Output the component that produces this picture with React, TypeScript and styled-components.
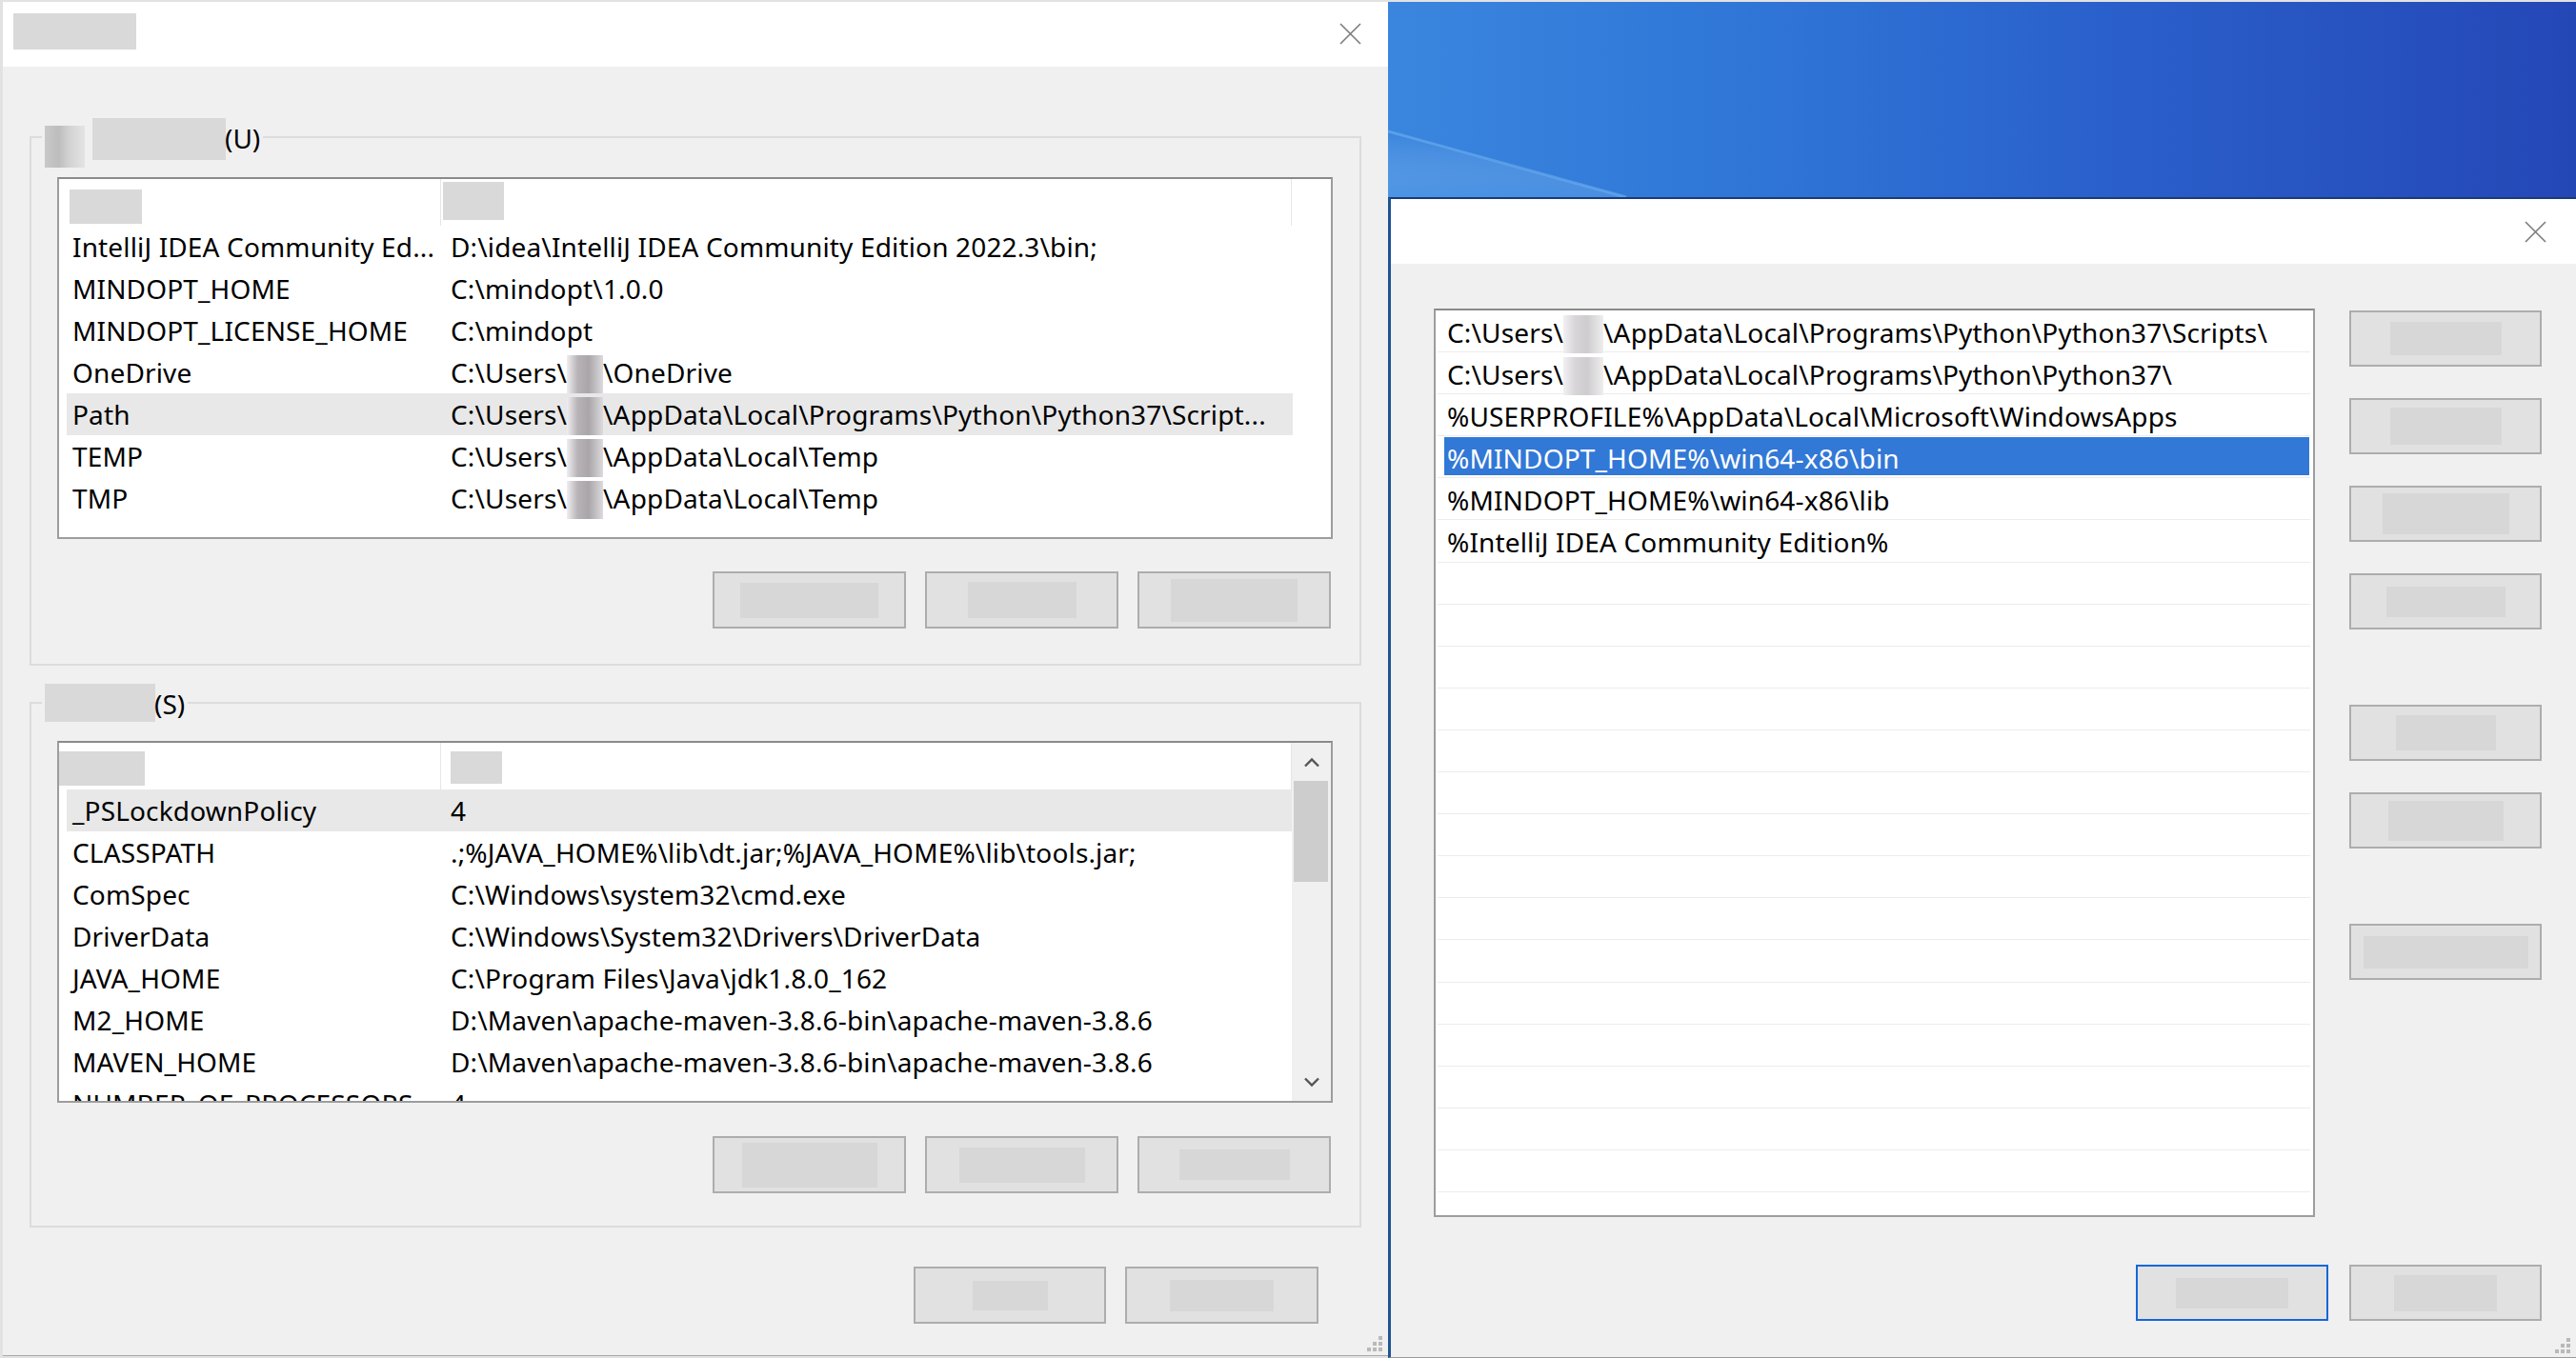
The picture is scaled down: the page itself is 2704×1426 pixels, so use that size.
import React from "react";
import styled, { createGlobalStyle } from "styled-components";

const GlobalStyle = createGlobalStyle`
  html, body {
    margin: 0;
    padding: 0;
  }
  body {
    width: 2704px;
    height: 1426px;
    overflow: hidden;
    background: #e2e2e2;
    font-family: "Noto Sans", "Liberation Sans", sans-serif;
    color: #000;
  }
  * {
    box-sizing: border-box;
  }
`;

const Screen = styled.div`
  display: flex;
  width: 2704px;
  height: 1426px;
  padding: 2px 0 0 3px;
  background: #e2e2e2;
`;

/* ---------- left window: environment variables ---------- */

const LeftWindow = styled.div`
  position: relative;
  display: flex;
  flex-direction: column;
  width: 1454px;
  height: 1422px;
  background: #f0f0f0;
  border-bottom: 1px solid #a9a9a9;
`;

const TitleBar = styled.div<{ $pad: string }>`
  display: flex;
  justify-content: space-between;
  align-items: flex-start;
  height: 68px;
  flex-shrink: 0;
  padding: ${(p) => p.$pad};
  background: #fff;
`;

const Smudge = styled.span<{ $w: number; $h: number; $c?: string }>`
  display: inline-block;
  flex-shrink: 0;
  width: ${(p) => p.$w}px;
  height: ${(p) => p.$h}px;
  background: ${(p) => p.$c || "#d9d9d9"};
`;

const CloseButton = styled.span<{ $mt: number }>`
  display: flex;
  margin-top: ${(p) => p.$mt}px;
`;

const LeftBody = styled.div`
  display: flex;
  flex-direction: column;
  padding-top: 73px;
`;

const GroupBox = styled.div<{ $mt: number; $pb: number }>`
  display: flex;
  flex-direction: column;
  margin: ${(p) => p.$mt}px 28px 0;
  padding: 0 28px ${(p) => p.$pb}px 27px;
  border: 2px solid #dcdcdc;
`;

const GroupTitle = styled.div<{ $gap: number }>`
  display: flex;
  align-items: flex-start;
  align-self: flex-start;
  height: 40px;
  margin: -21px 0 ${(p) => p.$gap}px -16px;
  padding: 0 3px;
  background: #f0f0f0;
  font-size: 28px;
  line-height: 40px;
`;

const GroupKey = styled.span`
  margin-left: -1px;
  line-height: 42px;
`;

const DarkSmudge = styled.span`
  display: inline-block;
  width: 42px;
  height: 44px;
  margin: 8px 8px 0 0;
  background: linear-gradient(
    90deg,
    #c9c9c9 0%,
    #bdbdbd 35%,
    #d2d2d2 60%,
    #e4e4e4 100%
  );
`;

const ListBox = styled.div<{ $h: number }>`
  display: flex;
  height: ${(p) => p.$h}px;
  border: 2px solid #9d9d9d;
  border-top-color: #8a8a8a;
  background: #fff;
  overflow: hidden;
`;

const ListMain = styled.div`
  flex: 1;
  min-width: 0;
  overflow: hidden;
`;

const Header = styled.div`
  display: flex;
  height: 49px;
`;

const HeaderCell = styled.div<{ $w: number }>`
  display: flex;
  width: ${(p) => p.$w}px;
  flex-shrink: 0;
  border-right: 1px solid #e6e6e6;
`;

const HeaderLabel = styled.span<{ $w: number; $h: number; $ml: number; $mt: number }>`
  display: inline-block;
  width: ${(p) => p.$w}px;
  height: ${(p) => p.$h}px;
  margin: ${(p) => p.$mt}px 0 0 ${(p) => p.$ml}px;
  background: #d9d9d9;
`;

const VarRow = styled.div<{ $active?: boolean }>`
  display: flex;
  width: 1287px;
  height: 44px;
  margin-left: 8px;
  font-size: 28px;
  line-height: 44px;
  letter-spacing: 0.15px;
  white-space: nowrap;
  background: ${(p) => (p.$active ? "#e8e8e8" : "transparent")};
`;

const NameCell = styled.div`
  width: 403px;
  flex-shrink: 0;
  padding: 0 8px 0 6px;
  overflow: hidden;
`;

const ValueCell = styled.div`
  flex: 1;
  min-width: 0;
  overflow: hidden;
`;

const Hidden = styled.span<{ $w: number; $light?: boolean }>`
  display: inline-block;
  width: ${(p) => p.$w}px;
  height: 40px;
  vertical-align: -11px;
  background: ${(p) =>
    p.$light
      ? "linear-gradient(90deg, #f2f0f2 0%, #d8d5d8 30%, #cfcccf 60%, #eeeeee 100%)"
      : "linear-gradient(90deg, #f0eef0 0%, #b7b3b7 30%, #a9a5a9 60%, #dcdadc 100%)"};
`;

const Scrollbar = styled.div`
  display: flex;
  flex-direction: column;
  width: 41px;
  flex-shrink: 0;
  background: #f0f0f0;
`;

const ScrollArrow = styled.div`
  display: flex;
  align-items: center;
  justify-content: center;
  height: 40px;
  flex-shrink: 0;
`;

const ScrollThumb = styled.div`
  height: 106px;
  margin: 0 3px 0 2px;
  background: #cdcdcd;
`;

const ScrollTrack = styled.div`
  flex: 1;
`;

const ButtonRow = styled.div<{ $mt: number; $pr: number; $gap: number }>`
  display: flex;
  justify-content: flex-end;
  gap: ${(p) => p.$gap}px;
  margin-top: ${(p) => p.$mt}px;
  padding-right: ${(p) => p.$pr}px;
`;

const Button = styled.div<{ $w: number; $h: number; $mt?: number; $primary?: boolean }>`
  display: flex;
  align-items: center;
  justify-content: center;
  width: ${(p) => p.$w}px;
  height: ${(p) => p.$h}px;
  margin-top: ${(p) => p.$mt || 0}px;
  flex-shrink: 0;
  background: #e1e1e1;
  border: 2px solid ${(p) => (p.$primary ? "#1467d8" : "#adadad")};
`;

const ButtonLabel = styled.span<{ $w: number; $h: number }>`
  display: inline-block;
  width: ${(p) => p.$w}px;
  height: ${(p) => p.$h}px;
  background: #d7d7d7;
`;

const Grip = styled.div`
  position: absolute;
  right: 4px;
  bottom: 2px;
  display: flex;
`;

/* ---------- right side: desktop and path editor ---------- */

const DesktopColumn = styled.div`
  display: flex;
  flex-direction: column;
  flex: 1;
  min-width: 0;
`;

const Wallpaper = styled.svg`
  display: block;
  width: 100%;
  height: 205px;
  flex-shrink: 0;
`;

const RightWindow = styled.div`
  position: relative;
  display: flex;
  flex-direction: column;
  flex: 1;
  background: #f0f0f0;
  border-top: 2px solid #1b3a7a;
  border-left: 3px solid #1e5493;
  border-bottom: 1px solid #9a9a9a;
`;

const RightBody = styled.div`
  display: flex;
  flex-direction: column;
  padding: 47px 36px 0 45px;
`;

const EditorRow = styled.div`
  display: flex;
  align-items: flex-start;
  gap: 36px;
`;

const PathList = styled.div`
  width: 925px;
  height: 954px;
  flex-shrink: 0;
  border: 2px solid #9d9d9d;
  border-top-color: #8a8a8a;
  background: #fff;
  overflow: hidden;
`;

const PathRow = styled.div`
  display: flex;
  height: 44.1px;
  margin: 0 3px 0 2px;
  padding: 1px 1px 3px 7px;
  border-bottom: 1px solid #ececec;
`;

const PathText = styled.div<{ $selected?: boolean }>`
  flex: 1;
  height: 40px;
  padding: 4px 0 0 3px;
  font-size: 28px;
  line-height: 36px;
  letter-spacing: 0.15px;
  white-space: nowrap;
  color: ${(p) => (p.$selected ? "#fff" : "#000")};
  background: ${(p) => (p.$selected ? "#3278d6" : "transparent")};
`;

const SideButtons = styled.div`
  display: flex;
  flex-direction: column;
  padding-top: 2px;
`;

/* ---------- data ---------- */

const userVars = [
  { name: "IntelliJ IDEA Community Ed...", value: "D:\\idea\\IntelliJ IDEA Community Edition 2022.3\\bin;" },
  { name: "MINDOPT_HOME", value: "C:\\mindopt\\1.0.0" },
  { name: "MINDOPT_LICENSE_HOME", value: "C:\\mindopt" },
  { name: "OneDrive", value: "C:\\Users\\*\\OneDrive" },
  { name: "Path", value: "C:\\Users\\*\\AppData\\Local\\Programs\\Python\\Python37\\Script...", active: true },
  { name: "TEMP", value: "C:\\Users\\*\\AppData\\Local\\Temp" },
  { name: "TMP", value: "C:\\Users\\*\\AppData\\Local\\Temp" },
];

const systemVars = [
  { name: "_PSLockdownPolicy", value: "4", active: true },
  { name: "CLASSPATH", value: ".;%JAVA_HOME%\\lib\\dt.jar;%JAVA_HOME%\\lib\\tools.jar;" },
  { name: "ComSpec", value: "C:\\Windows\\system32\\cmd.exe" },
  { name: "DriverData", value: "C:\\Windows\\System32\\Drivers\\DriverData" },
  { name: "JAVA_HOME", value: "C:\\Program Files\\Java\\jdk1.8.0_162" },
  { name: "M2_HOME", value: "D:\\Maven\\apache-maven-3.8.6-bin\\apache-maven-3.8.6" },
  { name: "MAVEN_HOME", value: "D:\\Maven\\apache-maven-3.8.6-bin\\apache-maven-3.8.6" },
  { name: "NUMBER_OF_PROCESSORS", value: "4" },
];

const pathEntries = [
  "C:\\Users\\*\\AppData\\Local\\Programs\\Python\\Python37\\Scripts\\",
  "C:\\Users\\*\\AppData\\Local\\Programs\\Python\\Python37\\",
  "%USERPROFILE%\\AppData\\Local\\Microsoft\\WindowsApps",
  "%MINDOPT_HOME%\\win64-x86\\bin",
  "%MINDOPT_HOME%\\win64-x86\\lib",
  "%IntelliJ IDEA Community Edition%",
  ...Array(16).fill(""),
];

// label smudge sizes for the buttons (the captions were blurred out)
const userButtons = [
  [145, 37],
  [114, 38],
  [133, 45],
];
const systemButtons = [
  [142, 47],
  [132, 37],
  [116, 32],
];
const sideButtons = [
  { lw: 117, lh: 35, mt: 0 },
  { lw: 117, lh: 39, mt: 33 },
  { lw: 133, lh: 43, mt: 33 },
  { lw: 125, lh: 32, mt: 33 },
  { lw: 105, lh: 37, mt: 79 },
  { lw: 121, lh: 42, mt: 33 },
  { lw: 173, lh: 34, mt: 79 },
];

/* ---------- pieces ---------- */

function Masked({ text, light }: { text: string; light?: boolean }) {
  const parts = text.split("*");
  return (
    <>
      {parts.map((part, i) => (
        <React.Fragment key={i}>
          {i > 0 && <Hidden $w={light ? 42 : 38} $light={light} />}
          {part}
        </React.Fragment>
      ))}
    </>
  );
}

function CloseIcon() {
  return (
    <svg width="23" height="23" viewBox="0 0 23 23">
      <path d="M1 1 L22 22 M22 1 L1 22" stroke="#7b7b7b" strokeWidth="1.6" fill="none" />
    </svg>
  );
}

function Chevron({ up }: { up?: boolean }) {
  return (
    <svg width="18" height="11" viewBox="0 0 18 11">
      <polyline
        points={up ? "2,9.5 9,2.5 16,9.5" : "2,1.5 9,8.5 16,1.5"}
        stroke="#555"
        strokeWidth="2.4"
        fill="none"
      />
    </svg>
  );
}

function GripIcon() {
  return (
    <svg width="20" height="20" viewBox="0 0 20 20">
      {[
        [14, 2],
        [14, 8],
        [8, 8],
        [14, 14],
        [8, 14],
        [2, 14],
      ].map(([x, y]) => (
        <rect key={`${x}-${y}`} x={x} y={y} width="4" height="4" fill="#b9b9b9" />
      ))}
    </svg>
  );
}

interface IVar {
  name: string;
  value: string;
  active?: boolean;
}

function VarList({
  vars,
  height,
  scroll,
  labels,
}: {
  vars: IVar[];
  height: number;
  scroll?: boolean;
  labels: number[][];
}) {
  return (
    <ListBox $h={height}>
      <ListMain>
        <Header>
          <HeaderCell $w={401}>
            <HeaderLabel $w={labels[0][0]} $h={labels[0][1]} $ml={labels[0][2]} $mt={labels[0][3]} />
          </HeaderCell>
          <HeaderCell $w={893}>
            <HeaderLabel $w={labels[1][0]} $h={labels[1][1]} $ml={labels[1][2]} $mt={labels[1][3]} />
          </HeaderCell>
        </Header>
        {vars.map((v) => (
          <VarRow key={v.name} $active={v.active}>
            <NameCell>{v.name}</NameCell>
            <ValueCell>
              <Masked text={v.value} />
            </ValueCell>
          </VarRow>
        ))}
      </ListMain>
      {scroll && (
        <Scrollbar>
          <ScrollArrow>
            <Chevron up />
          </ScrollArrow>
          <ScrollThumb />
          <ScrollTrack />
          <ScrollArrow>
            <Chevron />
          </ScrollArrow>
        </Scrollbar>
      )}
    </ListBox>
  );
}

function App() {
  return (
    <>
      <GlobalStyle />
      <Screen>
        <LeftWindow>
          <TitleBar $pad="12px 28px 0 11px">
            <Smudge $w={129} $h={38} />
            <CloseButton $mt={10}>
              <CloseIcon />
            </CloseButton>
          </TitleBar>
          <LeftBody>
            <GroupBox $mt={0} $pb={37}>
              <GroupTitle $gap={22}>
                <DarkSmudge />
                <Smudge $w={140} $h={44} />
                <GroupKey>(U)</GroupKey>
              </GroupTitle>
              <VarList
                vars={userVars}
                height={380}
                labels={[
                  [76, 36, 11, 11],
                  [64, 40, 2, 3],
                ]}
              />
              <ButtonRow $mt={34} $pr={2} $gap={20}>
                {userButtons.map(([w, h], i) => (
                  <Button key={i} $w={203} $h={60}>
                    <ButtonLabel $w={w} $h={h} />
                  </Button>
                ))}
              </ButtonRow>
            </GroupBox>
            <GroupBox $mt={38} $pb={34}>
              <GroupTitle $gap={20}>
                <Smudge $w={116} $h={40} />
                <GroupKey>(S)</GroupKey>
              </GroupTitle>
              <VarList
                vars={systemVars}
                height={380}
                scroll
                labels={[
                  [90, 36, 0, 9],
                  [54, 34, 10, 9],
                ]}
              />
              <ButtonRow $mt={35} $pr={2} $gap={20}>
                {systemButtons.map(([w, h], i) => (
                  <Button key={i} $w={203} $h={60}>
                    <ButtonLabel $w={w} $h={h} />
                  </Button>
                ))}
              </ButtonRow>
            </GroupBox>
            <ButtonRow $mt={41} $pr={73} $gap={20}>
              <Button $w={202} $h={60}>
                <ButtonLabel $w={79} $h={31} />
              </Button>
              <Button $w={203} $h={60}>
                <ButtonLabel $w={109} $h={33} />
              </Button>
            </ButtonRow>
          </LeftBody>
          <Grip>
            <GripIcon />
          </Grip>
        </LeftWindow>

        <DesktopColumn>
          <Wallpaper viewBox="0 0 1247 205" preserveAspectRatio="none">
            <defs>
              <linearGradient id="sky" x1="0" y1="0" x2="1" y2="0">
                <stop offset="0" stopColor="#3a86de" />
                <stop offset="0.3" stopColor="#2f76d7" />
                <stop offset="0.6" stopColor="#2a60cb" />
                <stop offset="1" stopColor="#2447b6" />
              </linearGradient>
              <linearGradient id="glow" x1="0" y1="0" x2="0" y2="1">
                <stop offset="0" stopColor="#ffffff" stopOpacity="0" />
                <stop offset="1" stopColor="#6aaef0" stopOpacity="0.35" />
              </linearGradient>
            </defs>
            <rect width="1247" height="205" fill="url(#sky)" />
            <polygon points="0,138 250,205 0,205" fill="url(#glow)" />
            <line x1="0" y1="136" x2="250" y2="205" stroke="#6fb0f0" strokeOpacity="0.6" strokeWidth="3" />
          </Wallpaper>
          <RightWindow>
            <TitleBar $pad="23px 31px 0 0">
              <span />
              <CloseButton $mt={0}>
                <CloseIcon />
              </CloseButton>
            </TitleBar>
            <RightBody>
              <EditorRow>
                <PathList>
                  {pathEntries.map((entry, i) => (
                    <PathRow key={i}>
                      <PathText $selected={i === 3}>
                        <Masked text={entry} light />
                      </PathText>
                    </PathRow>
                  ))}
                </PathList>
                <SideButtons>
                  {sideButtons.map((b, i) => (
                    <Button key={i} $w={202} $h={59} $mt={b.mt}>
                      <ButtonLabel $w={b.lw} $h={b.lh} />
                    </Button>
                  ))}
                </SideButtons>
              </EditorRow>
              <ButtonRow $mt={50} $pr={0} $gap={22}>
                <Button $w={202} $h={59} $primary>
                  <ButtonLabel $w={118} $h={32} />
                </Button>
                <Button $w={202} $h={59}>
                  <ButtonLabel $w={108} $h={38} />
                </Button>
              </ButtonRow>
            </RightBody>
            <Grip>
              <GripIcon />
            </Grip>
          </RightWindow>
        </DesktopColumn>
      </Screen>
    </>
  );
}

export default App;
